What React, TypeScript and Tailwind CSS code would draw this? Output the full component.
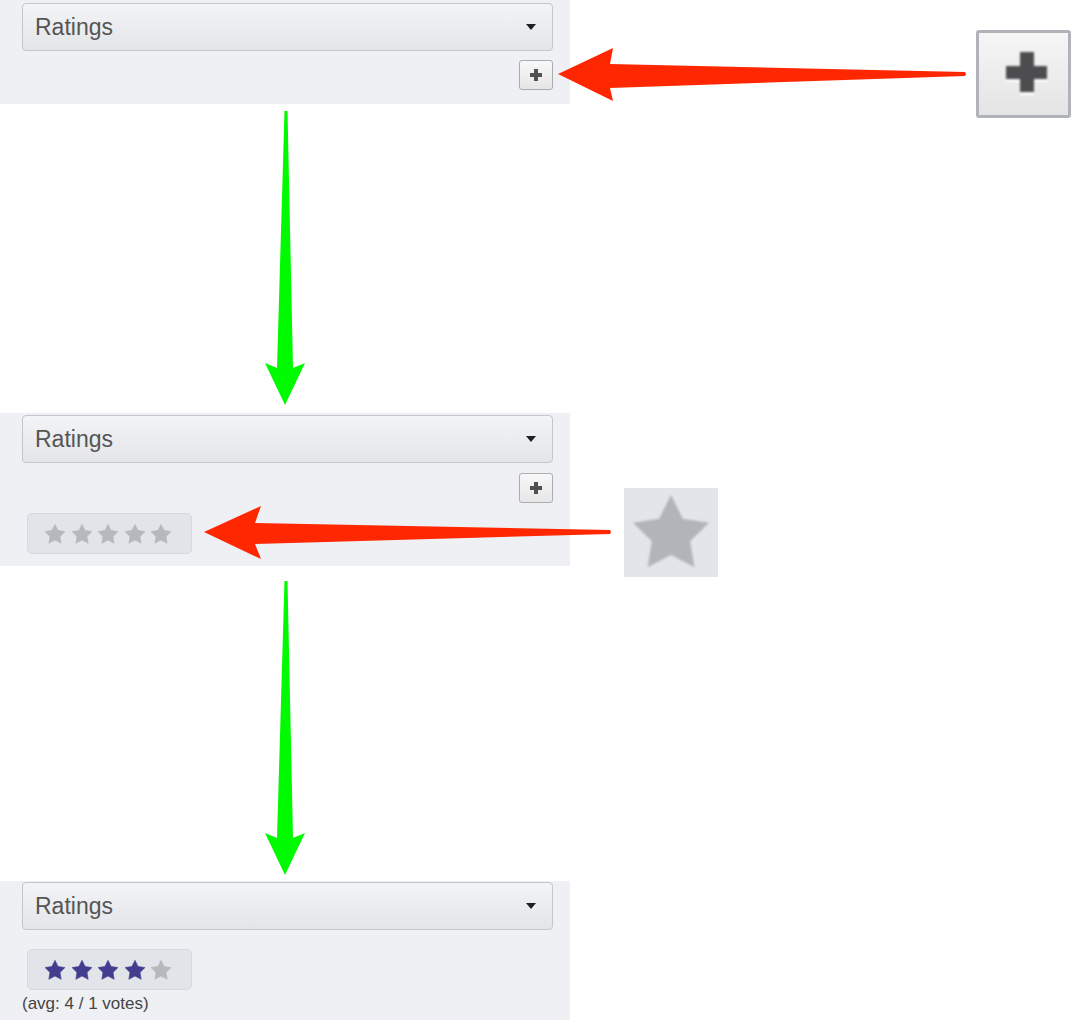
import React from 'react';

const STAR = '12,2.3 15.12,8.51 21.99,9.56 17.04,14.44 18.17,21.29 12,18.1 5.83,21.29 6.96,14.44 2.01,9.56 8.88,8.51';

const Star: React.FC<{ filled: boolean }> = ({ filled }) => (
  <svg width="24" height="24" viewBox="0 0 24 24" className="shrink-0">
    <polygon points={STAR} fill={filled ? '#433d8f' : '#b5b8bd'} strokeLinejoin="round" stroke={filled ? '#433d8f' : '#b5b8bd'} strokeWidth="0.6" />
  </svg>
);

const Dropdown: React.FC = () => (
  <div className="flex h-[48px] w-[531px] items-center justify-between rounded-[4px] border border-[#c3c6cb] bg-gradient-to-b from-[#f3f4f6] to-[#e4e5e8] pl-[12px] pr-[16px]">
    <span className="text-[23px] text-[#555]">Ratings</span>
    <svg width="10" height="6" viewBox="0 0 10 6">
      <polygon points="0,0 10,0 5,6" fill="#1f1f1f" />
    </svg>
  </div>
);

const PlusButton: React.FC = () => (
  <div className="flex h-[30px] w-[34px] items-center justify-center rounded-[3px] border border-[#a9acb1] bg-gradient-to-b from-[#f8f8f8] to-[#e6e6e6]">
    <svg width="12" height="12" viewBox="0 0 12 12">
      <rect x="4" y="0" width="4" height="12" fill="#505050" />
      <rect x="0" y="4" width="12" height="4" fill="#505050" />
    </svg>
  </div>
);

const Rating: React.FC<{ value: number }> = ({ value }) => (
  <div className="ml-[5px] flex h-[41px] w-[165px] items-center gap-[2.5px] rounded-[5px] border border-[#d3d9e0] bg-[#e1e5ea] pl-[15px]">
    {[1, 2, 3, 4, 5].map(n => (
      <Star key={n} filled={n <= value} />
    ))}
  </div>
);

export default function App() {
  return (
    <div className="relative h-[1020px] w-[1074px] overflow-hidden bg-white font-['Liberation_Sans',Arial,sans-serif]">
      <div className="flex w-[570px] flex-col">
        {/* step 1 */}
        <div className="flex h-[104px] flex-col bg-[#eff0f4] pl-[22px] pt-[3px]">
          <Dropdown />
          <div className="mt-[9px] flex w-[531px] justify-end">
            <PlusButton />
          </div>
        </div>

        {/* step 2 */}
        <div className="mt-[309px] flex h-[153px] flex-col bg-[#eff0f4] pl-[22px] pt-[2px]">
          <Dropdown />
          <div className="mt-[10px] flex w-[531px] justify-end">
            <PlusButton />
          </div>
          <div className="mt-[10px]">
            <Rating value={0} />
          </div>
        </div>

        {/* step 3 */}
        <div className="mt-[315px] flex h-[139px] flex-col bg-[#eff0f4] pl-[22px] pt-[1px]">
          <Dropdown />
          <div className="mt-[19px]">
            <Rating value={4} />
          </div>
          <p className="mt-[4px] text-[17px] leading-[20px] text-[#444]">(avg: 4 / 1 votes)</p>
        </div>
      </div>

      {/* enlarged plus */}
      <div className="absolute left-[976px] top-[30px] h-[88px] w-[95px] rounded-[3px] border-[3px] border-[#b0b3b7] bg-gradient-to-b from-[#f6f6f6] to-[#e4e4e4]">
        <svg width="89" height="82" viewBox="0 0 89 82" className="blur-[0.8px]">
          <rect x="41" y="19" width="14" height="40" fill="#4d4d4f" />
          <rect x="27" y="33" width="41" height="13" fill="#4d4d4f" />
          <rect x="27" y="47" width="13" height="2" fill="#ffffff" />
          <rect x="56" y="47" width="12" height="2" fill="#ffffff" />
          <rect x="41" y="60" width="14" height="2" fill="#ffffff" />
        </svg>
      </div>

      {/* enlarged star */}
      <div className="absolute left-[624px] top-[488px] h-[89px] w-[94px] bg-[#e2e6eb]">
        <svg width="94" height="89" viewBox="0 0 94 89" className="blur-[1px]">
          <polygon points={STAR} transform="translate(1.4,-1.7) scale(3.8)" fill="#b1b4b9" />
        </svg>
      </div>

      {/* arrows */}
      <svg className="pointer-events-none absolute left-0 top-0" width="1074" height="1020" viewBox="0 0 1074 1020">
        <polygon points="558,74 613,48 610,64 965,72 966,74 965,76 610,88 613,101" fill="#ff2700" />
        <polygon points="204,532 261,506 255,523 610,530 611,532 610,534 255,544 261,559" fill="#ff2700" />
        <polygon points="284.5,111 287.5,111 293,368 305,363 285,405 265,363 277,368" fill="#00fa00" />
        <polygon points="284.5,581 287.5,581 293,838 305,833 285,875 265,833 277,838" fill="#00fa00" />
      </svg>
    </div>
  );
}
